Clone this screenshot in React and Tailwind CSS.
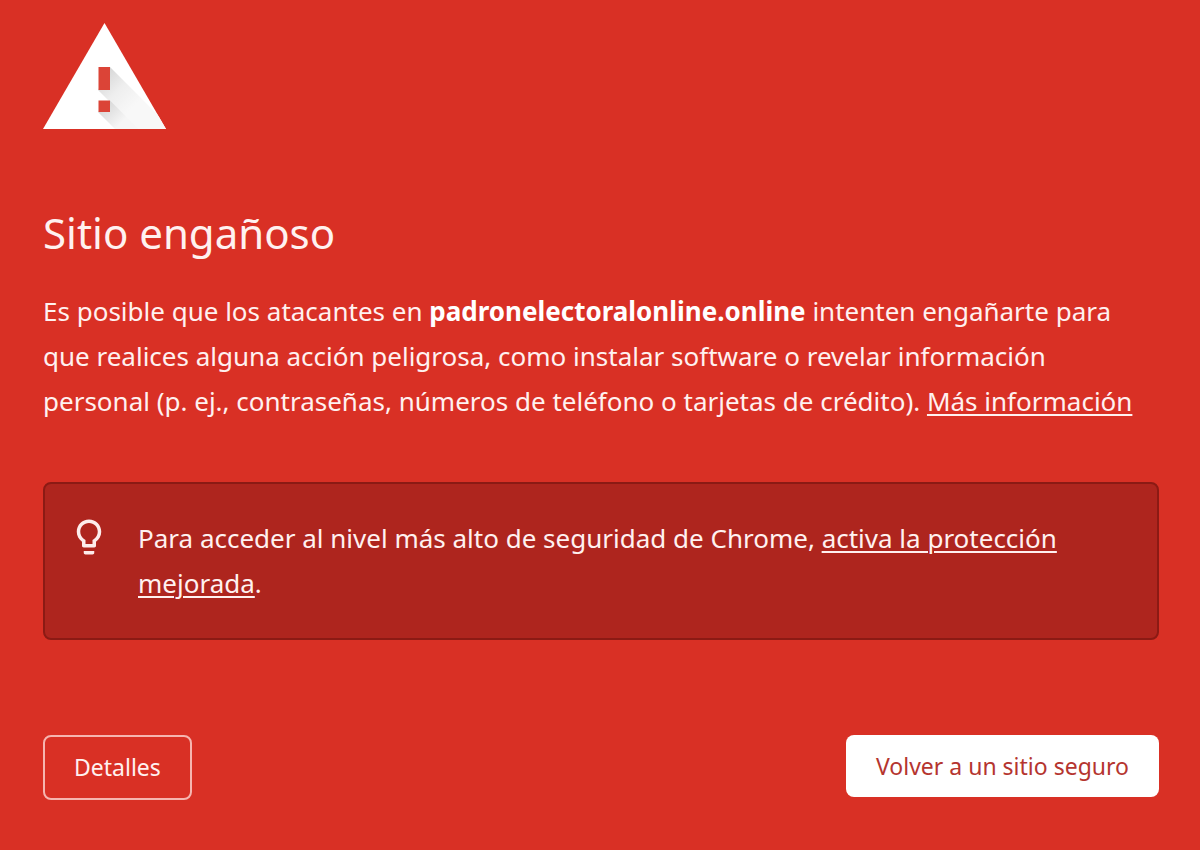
import React from 'react';

function WarningIcon() {
  return (
    <svg className="h-[106px] w-[123px]" viewBox="0 0 123 106" aria-hidden="true">
      <defs>
        <linearGradient id="shade" x1="60" y1="50" x2="92" y2="82" gradientUnits="userSpaceOnUse">
          <stop offset="0" stopColor="#d6d6d6" />
          <stop offset="0.5" stopColor="#eeeeee" />
          <stop offset="1" stopColor="#f8f8f8" />
        </linearGradient>
        <linearGradient id="shade-dot" x1="60" y1="82" x2="78" y2="100" gradientUnits="userSpaceOnUse">
          <stop offset="0" stopColor="#d6d6d6" />
          <stop offset="1" stopColor="#f6f6f6" />
        </linearGradient>
        <clipPath id="triangle">
          <path d="M61.500 0L123 106H0z" />
        </clipPath>
      </defs>
      <path d="M61.500 0L123 106H0z" fill="#fff" />
      <g clipPath="url(#triangle)">
        <path d="M67 44L129 106H94L55 67z" fill="url(#shade)" />
        <path d="M67 77.500L95.500 106H72L55 89z" fill="url(#shade-dot)" />
      </g>
      <path d="M55.500 44H67v23H55.500zM55.500 77.500H67V89H55.500z" fill="#db4437" />
    </svg>
  );
}

function BulbIcon() {
  return (
    <svg className="h-[42px] w-11 shrink-0" viewBox="0 0 24 24" fill="#fdeceb" aria-hidden="true">
      <path d="M9 21c0 .5.400 1 1 1h4c.600 0 1-.500 1-1v-1H9v1zm3-19C8.100 2 5 5.100 5 9c0 2.400 1.200 4.500 3 5.700V17c0 .500.400 1 1 1h6c.600 0 1-.500 1-1v-2.300c1.800-1.300 3-3.400 3-5.700 0-3.900-3.100-7-7-7zm2.850 11.100l-.850.600V16h-4v-2.300l-.850-.600C7.800 12.160 7 10.630 7 9c0-2.760 2.240-5 5-5s5 2.240 5 5c0 1.630-.800 3.160-2.150 4.100z" />
    </svg>
  );
}

export default function App() {
  return (
    <main className="min-h-screen bg-[#d93025] pt-[23px] pr-[41px] pb-12 pl-[43px] font-['Noto_Sans','Open_Sans',sans-serif] text-[26px] leading-[45px] text-[#fff1f0]">
      <WarningIcon />
      <h1 className="mt-[74px] text-[42px] leading-[60px]">Sitio engañoso</h1>
      <p className="mt-[26px]">
        Es posible que los atacantes en <strong className="font-bold text-white">padronelectoralonline.online</strong>{' '}
        intenten engañarte para que realices alguna acción peligrosa, como instalar software o revelar información
        personal (p. ej., contraseñas, números de teléfono o tarjetas de crédito).{' '}
        <a href="#info" className="underline decoration-2 underline-offset-3">Más información</a>
      </p>
      <section className="mt-[58px] flex gap-[27px] rounded-lg border-2 border-[#8b1a14] bg-[#ae251e] py-8 pr-6 pl-[22px]">
        <BulbIcon />
        <p>
          Para acceder al nivel más alto de seguridad de Chrome,{' '}
          <a href="#proteccion" className="underline decoration-2 underline-offset-3">activa la protección mejorada</a>.
        </p>
      </section>
      <div className="mt-[95px] flex items-start justify-between text-[23px]">
        <button type="button" className="h-[65px] rounded-lg border-2 border-[#f6b5b0] px-[29px]">Detalles</button>
        <button type="button" className="h-[62px] rounded-lg bg-white px-[30px] text-[#b5352f]">Volver a un sitio seguro</button>
      </div>
    </main>
  );
}
